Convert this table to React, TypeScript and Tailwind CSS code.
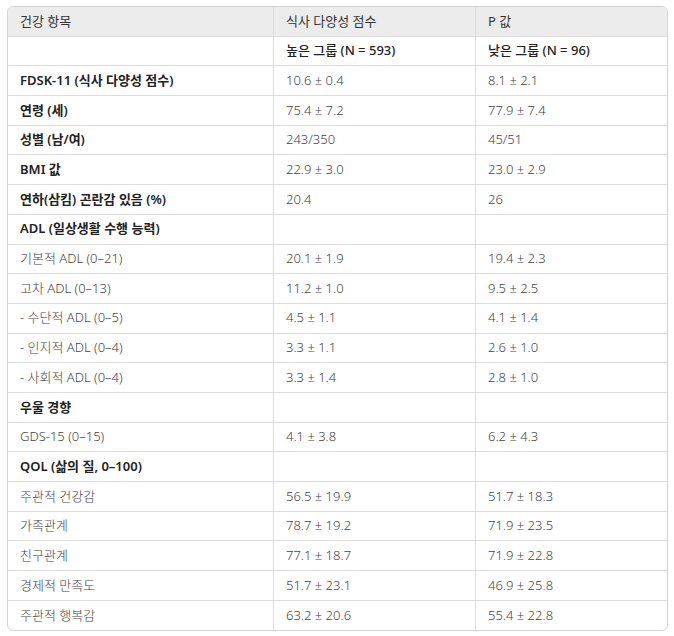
import React from "react";

type Row = {
  label: string;
  high: string;
  low: string;
  strong?: boolean;
};

const rows: Row[] = [
  { label: "FDSK-11 (식사 다양성 점수)", high: "10.6 ± 0.4", low: "8.1 ± 2.1", strong: true },
  { label: "연령 (세)", high: "75.4 ± 7.2", low: "77.9 ± 7.4", strong: true },
  { label: "성별 (남/여)", high: "243/350", low: "45/51", strong: true },
  { label: "BMI 값", high: "22.9 ± 3.0", low: "23.0 ± 2.9", strong: true },
  { label: "연하(삼킴) 곤란감 있음 (%)", high: "20.4", low: "26", strong: true },
  { label: "ADL (일상생활 수행 능력)", high: "", low: "", strong: true },
  { label: "기본적 ADL (0–21)", high: "20.1 ± 1.9", low: "19.4 ± 2.3" },
  { label: "고차 ADL (0–13)", high: "11.2 ± 1.0", low: "9.5 ± 2.5" },
  { label: "- 수단적 ADL (0–5)", high: "4.5 ± 1.1", low: "4.1 ± 1.4" },
  { label: "- 인지적 ADL (0–4)", high: "3.3 ± 1.1", low: "2.6 ± 1.0" },
  { label: "- 사회적 ADL (0–4)", high: "3.3 ± 1.4", low: "2.8 ± 1.0" },
  { label: "우울 경향", high: "", low: "", strong: true },
  { label: "GDS-15 (0–15)", high: "4.1 ± 3.8", low: "6.2 ± 4.3" },
  { label: "QOL (삶의 질, 0–100)", high: "", low: "", strong: true },
  { label: "주관적 건강감", high: "56.5 ± 19.9", low: "51.7 ± 18.3" },
  { label: "가족관계", high: "78.7 ± 19.2", low: "71.9 ± 23.5" },
  { label: "친구관계", high: "77.1 ± 18.7", low: "71.9 ± 22.8" },
  { label: "경제적 만족도", high: "51.7 ± 23.1", low: "46.9 ± 25.8" },
  { label: "주관적 행복감", high: "63.2 ± 20.6", low: "55.4 ± 22.8" },
];

const rowCls =
  "grid h-[29.7px] grid-cols-[266px_202px_1fr] items-center border-b border-[#dcdcdc]";
const cellCls = "flex h-full items-center border-r border-[#dcdcdc] pl-3";

export default function App() {
  return (
    <div
      className="min-h-screen bg-white pl-[7px] pt-[6px] text-[13px]"
      style={{ fontFamily: '"Noto Sans", "Noto Sans CJK KR", sans-serif' }}
    >
      <div className="w-[661px] overflow-hidden rounded-md border border-[#d4d4d4]">
        {/* header */}
        <div className={`${rowCls} bg-[#ececec] text-[#333]`}>
          <div className={cellCls}>건강 항목</div>
          <div className={cellCls}>식사 다양성 점수</div>
          <div className="pl-3">P 값</div>
        </div>

        {/* group sizes */}
        <div className={`${rowCls} font-medium text-[#222]`}>
          <div className={cellCls}></div>
          <div className={cellCls}>높은 그룹 (N = 593)</div>
          <div className="pl-3">낮은 그룹 (N = 96)</div>
        </div>

        {rows.map((r, i) => (
          <div
            key={r.label}
            className={`${rowCls} ${i === rows.length - 1 ? "border-b-0" : ""}`}
          >
            <div
              className={`${cellCls} ${
                r.strong ? "font-semibold text-[#222]" : "font-light text-[#444]"
              }`}
            >
              {r.label}
            </div>
            <div className={`${cellCls} font-light text-[#444]`}>{r.high}</div>
            <div className="pl-3 font-light text-[#444]">{r.low}</div>
          </div>
        ))}
      </div>
    </div>
  );
}
